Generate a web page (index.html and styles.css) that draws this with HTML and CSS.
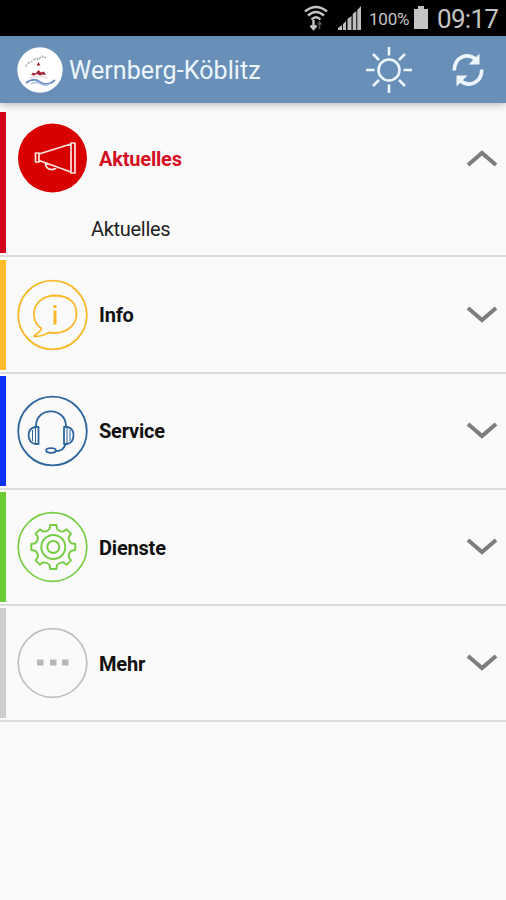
FILE: index.html
```html
<!DOCTYPE html>
<html lang="de">
<head>
<meta charset="utf-8">
<title>Wernberg-Köblitz</title>
<link rel="stylesheet" href="styles.css">
</head>
<body>
<div class="status">
  <svg class="wifi" width="26" height="28" viewBox="0 0 26 28" fill="none" stroke="#c4c4c4" stroke-width="2.400">
    <path d="M2 7.500Q13-1.500 24 7.500M5 11.500Q13 4.500 21 11.500M8.500 15.500Q13 11 17.500 15.500"/>
    <path d="M10.500 16v9M7.500 21.500l3 3.500 3-3.500"/><path d="M16.500 25v-7M14.500 20.500l2-2.500 2 2.500" stroke="#555" stroke-width="1.500"/>
  </svg>
  <svg class="signal" width="24" height="24" viewBox="0 0 24 24" fill="#bdbdbd">
    <path d="M0 24v-2l4-3v5zM5 24v-6l3-3v9zM9.500 24V13l4-3v14zM14.700 24V8l3.600-3v19zM19.300 24V4L23 0v24z"/>
  </svg>
  <span class="percent">100%</span>
  <svg class="battery" width="14" height="23" viewBox="0 0 14 23" fill="#c4c4c4"><path d="M4 0h6v3h4v20H0V3h4z"/></svg>
  <span class="clock">09:17</span>
</div>
<header class="appbar">
  <svg class="logo" width="46" height="46" viewBox="0 0 46 46">
    <circle cx="23" cy="23" r="22.700" fill="#fff"/>
    <path d="M8.500 20l3-4 4-2M16 13l4-2 1 2 4-4 2 2 2-1" fill="none" stroke="#a3a6ae" stroke-width="1.200" stroke-dasharray="3 1"/>
    <path d="M21.500 15l2 3.500h-4zM14 28l2-2.500 2.500 1 3-3.500 2.500 2.500 3-1 2 3.500-3.500-.5-2.500 1-3-1.500-3 1.500z" fill="#a5273b"/>
    <path d="M13 31q7-3 18 0" fill="none" stroke="#e0ced4"/>
    <path d="M9 36q7-6 14-1t15-2" fill="none" stroke="#6e91cd" stroke-width="2"/>
    <path d="M14 37q5-3 10 0t10-1" fill="none" stroke="#a8bbdf" stroke-width="1.400"/>
  </svg>
  <h1 class="title">Wernberg-Köblitz</h1>
  <svg class="sun" width="46" height="46" viewBox="0 0 46 46" fill="none" stroke="#edf5fc" stroke-width="2.600">
    <circle cx="23" cy="23" r="10.500"/>
    <path d="M23 0v8.500M23 37.500V46M0 23h8.500M37.500 23H46M7 7l6 6M33 33l6 6M39 7l-6 6M13 33l-6 6"/>
  </svg>
  <svg class="sync" width="32" height="34" viewBox="0 0 32 34" fill="none" stroke="#edf5fc" stroke-width="3.700">
    <path d="M2.200 17.500C2.500 4 15-1 24 6.500M29.800 16.500C29.500 30 17 35 8 27.500"/>
    <path d="M27.500 .5V11.500H16.500zM4.500 33.500V22.500h11z" fill="#edf5fc" stroke="none"/>
  </svg>
</header>
<main class="list">
  <section class="item open">
    <div class="content red">
      <div class="head">
        <svg class="icon" width="72" height="72" viewBox="0 0 72 72" fill="none" stroke="#ffe4df" stroke-width="1.700" stroke-linejoin="round">
          <circle cx="35.500" cy="36" r="34.500" fill="#d90000" stroke="none"/>
          <path d="M22 32L54 22M22 38.500L54 50M54 21h4v30h-4zM18.500 31h3.500v9h-3.500zM28.500 41c0 8 10 8 11 3.500"/>
        </svg>
        <h2 class="label">Aktuelles</h2>
        <svg class="chevron" width="32" height="18" viewBox="0 0 32 18"><path d="M2 16L16 4l14 12"/></svg>
      </div>
      <div class="sub">Aktuelles</div>
    </div>
  </section>
  <section class="item first-closed">
    <div class="content yellow">
      <div class="head">
        <svg class="icon" width="72" height="72" viewBox="0 0 72 72" fill="none" stroke="#f7b92c" stroke-width="1.800" stroke-linejoin="round">
          <circle cx="35.500" cy="36" r="34.300"/>
          <path d="M24.500 49.500C11 41 15 17 38 16.500C54 17 60 25 59.500 36C59 46 50 54 38 54L32 53.500C27 56.500 23 57.500 17 57.500C18 55 23 54 24.500 49.500z"/>
          <path d="M38 31.500V45.500M38 26v3" stroke-width="3"/>
        </svg>
        <h2 class="label">Info</h2>
        <svg class="chevron" width="32" height="18" viewBox="0 0 32 18"><path d="M2 2l14 12L30 2"/></svg>
      </div>
    </div>
  </section>
  <section class="item">
    <div class="content blue">
      <div class="head">
        <svg class="icon" width="72" height="72" viewBox="0 0 72 72" fill="none" stroke="#2d659f" stroke-width="1.800" stroke-linejoin="round">
          <circle cx="35.500" cy="36" r="34.300"/>
          <path d="M19 31C19 11.500 48.500 11.500 49 31M48.500 48C48 54 43 56.500 38.500 56"/>
          <path d="M18 32h3.500v17H18C10 47 9 34 18 32zM50.500 32H47v17h3.500C58 47 59 34 50.500 32z"/>
          <path d="M18.500 33v15M50 33v15M15.500 35v11M53 35v11" stroke-width="1"/>
          <ellipse cx="34" cy="55.500" rx="4.800" ry="2.300"/>
        </svg>
        <h2 class="label">Service</h2>
        <svg class="chevron" width="32" height="18" viewBox="0 0 32 18"><path d="M2 2l14 12L30 2"/></svg>
      </div>
    </div>
  </section>
  <section class="item">
    <div class="content green">
      <div class="head low">
        <svg class="icon" width="72" height="72" viewBox="0 0 72 72" fill="none" stroke="#76cc43" stroke-width="1.900" stroke-linejoin="round">
          <circle cx="35.500" cy="36" r="34.300" stroke-width="1.700"/>
          <g transform="translate(36.300 36)">
            <path d="M-3.800-18L-3-22H3L3.800-18Q6.300-15 10-15.400L13.400-17.700L17.700-13.400L15.400-10Q15-6.300 18-3.800L22-3V3L18 3.800Q15 6.300 15.400 10L17.700 13.400L13.400 17.700L10 15.400Q6.300 15 3.800 18L3 22H-3L-3.800 18Q-6.300 15-10 15.400L-13.400 17.700L-17.700 13.400L-15.400 10Q-15 6.300-18 3.800L-22 3V-3L-18-3.800Q-15-6.300-15.400-10L-17.700-13.400L-13.400-17.700L-10-15.400Q-6.300-15-3.800-18z"/>
            <circle r="12"/><circle r="6"/>
          </g>
        </svg>
        <h2 class="label">Dienste</h2>
        <svg class="chevron" width="32" height="18" viewBox="0 0 32 18"><path d="M2 2l14 12L30 2"/></svg>
      </div>
    </div>
  </section>
  <section class="item">
    <div class="content gray">
      <div class="head low">
        <svg class="icon" width="72" height="72" viewBox="0 0 72 72" fill="none" stroke="#bfbfbf" stroke-width="1.700">
          <circle cx="35.500" cy="36" r="34.300"/>
          <path d="M20 32.500h6.500v6H20zM33 32.500h6.500v6H33zM45 32.500h6.500v6H45z" fill="#b7b7b7" stroke="none"/>
        </svg>
        <h2 class="label">Mehr</h2>
        <svg class="chevron" width="32" height="18" viewBox="0 0 32 18"><path d="M2 2l14 12L30 2"/></svg>
      </div>
    </div>
  </section>
</main>
</body>
</html>
```
FILE: styles.css
```css
* { box-sizing: border-box; }
body {
  margin: 0;
  height: 900px;
  background: #fafafa;
  font-family: Roboto, "Liberation Sans", sans-serif;
  color: #111;
}
svg { display: block; flex: none; }
.status {
  display: flex;
  height: 36px;
  padding-left: 303px;
  background: #000;
  color: #c4c4c4;
}
.wifi { margin-top: 4px; }
.signal { margin: 6px 0 0 9px; }
.percent { margin-left: 7px; width: 41px; font-size: 17px; line-height: 39px; letter-spacing: -0.2px; }
.battery { margin: 6px 0 0 4px; }
.clock { margin-left: 9px; font-size: 26px; line-height: 39px; letter-spacing: -0.7px; }
.appbar {
  display: flex;
  align-items: center;
  height: 67px;
  padding-left: 17px;
  background: #688fb7;
  box-shadow: 0 1px 8px rgba(0, 0, 0, 0.3);
}
.title {
  margin: 2px 0 0 6px;
  width: 297px;
  font-size: 25px;
  font-weight: 400;
  letter-spacing: 0.1px;
  color: #edf5fc;
  white-space: nowrap;
}
.sync { margin-left: 40px; }
.list { padding-top: 6px; }
.item { padding: 2px 0; border-bottom: 2px solid #dcdcdc; }
.open, .first-closed { padding-top: 3px; }
.content { height: 110px; border-left: 6px solid; }
.open .content { height: 141px; }
.red { border-color: #d3001b; }
.yellow { border-color: #fcbb2a; }
.blue { border-color: #0c32fa; }
.green { border-color: #6acb32; }
.gray { border-color: #cdcdcd; }
.head { display: flex; align-items: center; height: 109px; padding: 0 8px 0 11px; }
.low { height: 110px; }
.open .head { height: 92px; }
.label { margin: 1px auto 0 10px; font-size: 20px; font-weight: 700; letter-spacing: -0.2px; color: #111; }
.open .label { color: #d3101f; }
.chevron { fill: none; stroke: #7d7d7d; stroke-width: 4; }
.sub { padding-left: 85px; margin-top: 12px; font-size: 20px; line-height: 26px; letter-spacing: -0.3px; color: #222; }
```
